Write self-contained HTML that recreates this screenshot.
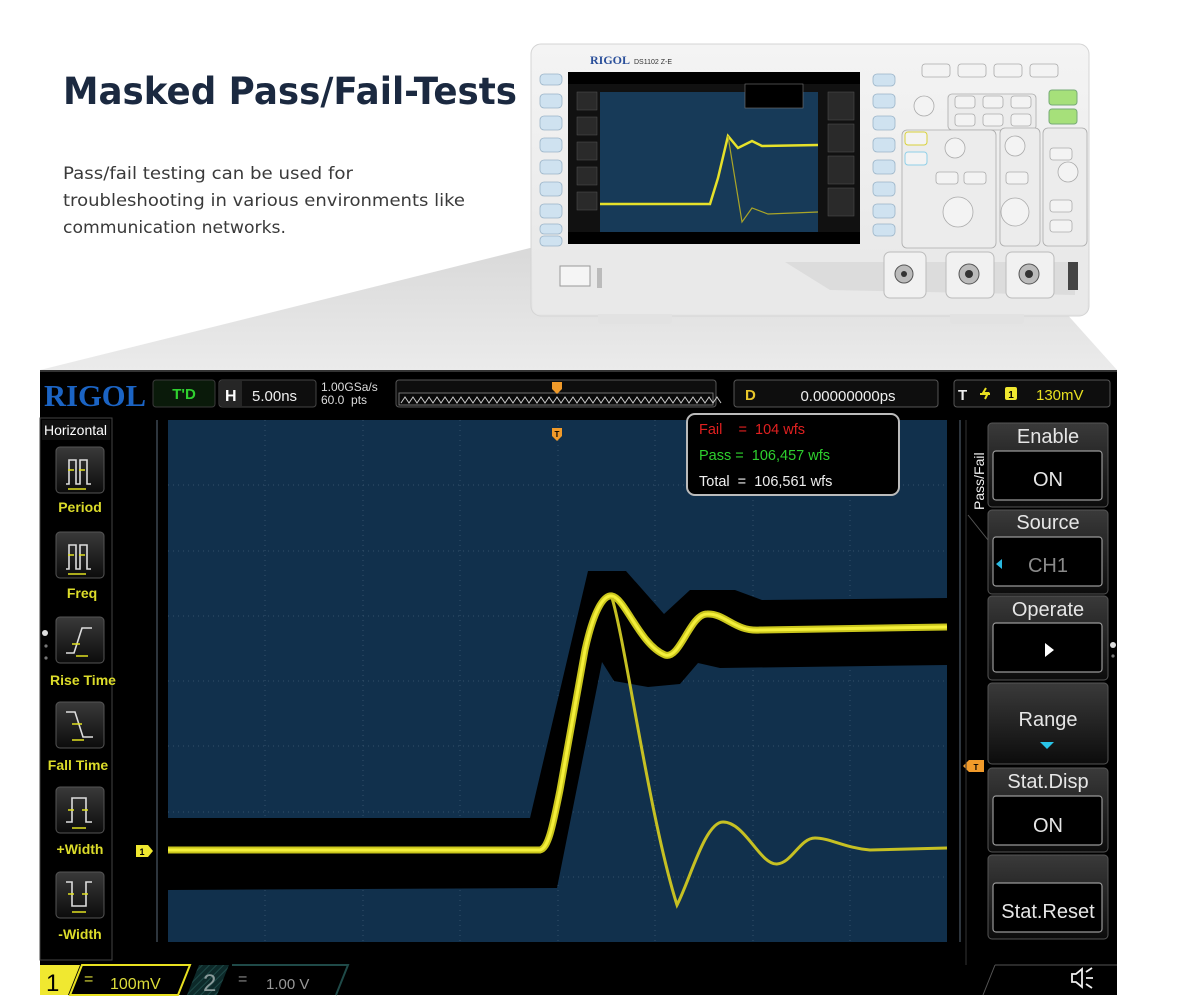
<!DOCTYPE html>
<html><head><meta charset="utf-8"><style>
html,body{margin:0;padding:0;background:#fff;}
svg{display:block}
svg text{font-family:"Liberation Sans",Arial,sans-serif;white-space:pre}
svg text.dv{font-family:"DejaVu Sans",sans-serif}
svg text.sf{font-family:"Liberation Serif",serif}
</style></head><body>
<svg width="1200" height="1000" viewBox="0 0 1200 1000" xmlns="http://www.w3.org/2000/svg" xml:space="preserve">
<defs>
<linearGradient id="gr" x1="0" y1="0" x2="0" y2="1"><stop offset="0" stop-color="#d9d9d9"/><stop offset="1" stop-color="#ebebeb"/></linearGradient>
<linearGradient id="btn" x1="0" y1="0" x2="0" y2="1"><stop offset="0" stop-color="#3a3a3a"/><stop offset="1" stop-color="#0c0c0c"/></linearGradient>
<linearGradient id="dev" x1="0" y1="0" x2="0" y2="1"><stop offset="0" stop-color="#f4f4f4"/><stop offset="1" stop-color="#e6e6e6"/></linearGradient>
<pattern id="hatch" width="5" height="5" patternUnits="userSpaceOnUse" patternTransform="rotate(45)"><rect width="5" height="5" fill="#0d2a2a"/><line x1="0" y1="0" x2="0" y2="5" stroke="#1f4a48" stroke-width="2"/></pattern>
</defs>
<rect width="1200" height="1000" fill="#fff"/>
<text class="dv" x="63" y="104" font-size="37" font-weight="bold" fill="#1b2940" textLength="454" lengthAdjust="spacingAndGlyphs">Masked Pass/Fail-Tests</text>
<g font-size="16.5" fill="#3a3a3a">
<text class="dv" x="63" y="179" textLength="290" lengthAdjust="spacingAndGlyphs">Pass/fail testing can be used for</text>
<text class="dv" x="63" y="206" textLength="402" lengthAdjust="spacingAndGlyphs">troubleshooting in various environments like</text>
<text class="dv" x="63" y="233" textLength="223" lengthAdjust="spacingAndGlyphs">communication networks.</text>
</g>
<polygon points="530,248 1065,312 1117,370 40,370" fill="url(#gr)"/>
<g>
<rect x="531" y="44" width="558" height="272" rx="10" fill="url(#dev)" stroke="#d4d4d4"/>
<rect x="598" y="306" width="74" height="18" rx="3" fill="#e2e2e2"/>
<rect x="950" y="306" width="74" height="18" rx="3" fill="#e2e2e2"/>
<rect x="533" y="250" width="554" height="64" rx="6" fill="#e9e9e9"/>
<rect x="560" y="266" width="30" height="20" fill="#f5f5f5" stroke="#999"/>
<rect x="597" y="268" width="5" height="20" fill="#bbb"/>
<polygon points="785,262 830,290 1075,295 1075,262" fill="#dcdcdc"/>
<text class="sf" x="590" y="64" font-size="12" font-weight="bold" fill="#2a4f9a">RIGOL</text>
<text x="634" y="64" font-size="7" fill="#333">DS1102 Z-E</text>
<rect x="568" y="72" width="292" height="172" fill="#111"/>
<rect x="600" y="92" width="218" height="140" fill="#173a58"/>
<rect x="568" y="72" width="292" height="12" fill="#000"/>
<rect x="568" y="232" width="292" height="12" fill="#000"/>
<rect x="745" y="84" width="58" height="24" fill="#000" stroke="#777" stroke-width="0.6"/>
<g fill="#2a2a2a" stroke="#555" stroke-width="0.5">
<rect x="577" y="92" width="20" height="18"/><rect x="577" y="117" width="20" height="18"/><rect x="577" y="142" width="20" height="18"/><rect x="577" y="167" width="20" height="18"/><rect x="577" y="192" width="20" height="18"/>
<rect x="828" y="92" width="26" height="28"/><rect x="828" y="124" width="26" height="28"/><rect x="828" y="156" width="26" height="28"/><rect x="828" y="188" width="26" height="28"/>
</g>
<polyline points="600,204 710,204 718,178 728,136 738,148 752,141 762,146 818,145" fill="none" stroke="#e6e12a" stroke-width="2.5"/>
<polyline points="728,136 742,222 752,208 768,214 818,212" fill="none" stroke="#aaa528" stroke-width="1.2"/>
<g fill="#cfe2f0" stroke="#9bb4c8" stroke-width="0.8">
<rect x="540" y="74" width="22" height="11" rx="4"/>
<rect x="540" y="94" width="22" height="14" rx="4"/><rect x="540" y="116" width="22" height="14" rx="4"/><rect x="540" y="138" width="22" height="14" rx="4"/><rect x="540" y="160" width="22" height="14" rx="4"/><rect x="540" y="182" width="22" height="14" rx="4"/><rect x="540" y="204" width="22" height="14" rx="4"/>
<rect x="540" y="224" width="22" height="10" rx="4"/><rect x="540" y="236" width="22" height="10" rx="4"/>
<rect x="873" y="74" width="22" height="12" rx="4"/><rect x="873" y="94" width="22" height="14" rx="4"/><rect x="873" y="116" width="22" height="14" rx="4"/><rect x="873" y="138" width="22" height="14" rx="4"/><rect x="873" y="160" width="22" height="14" rx="4"/><rect x="873" y="182" width="22" height="14" rx="4"/><rect x="873" y="204" width="22" height="14" rx="4"/><rect x="873" y="224" width="22" height="12" rx="4"/>
</g>
<g fill="#f3f3f3" stroke="#aaa" stroke-width="0.8">
<rect x="922" y="64" width="28" height="13" rx="3"/><rect x="958" y="64" width="28" height="13" rx="3"/><rect x="994" y="64" width="28" height="13" rx="3"/><rect x="1030" y="64" width="28" height="13" rx="3"/>
<rect x="948" y="94" width="88" height="36" rx="4" fill="#ececec"/>
<rect x="955" y="96" width="20" height="12" rx="3"/><rect x="983" y="96" width="20" height="12" rx="3"/><rect x="1011" y="96" width="20" height="12" rx="3"/>
<rect x="955" y="114" width="20" height="12" rx="3"/><rect x="983" y="114" width="20" height="12" rx="3"/><rect x="1011" y="114" width="20" height="12" rx="3"/>
<rect x="902" y="130" width="94" height="118" rx="5" fill="#ececec"/>
<rect x="1000" y="128" width="40" height="118" rx="5" fill="#ececec"/>
<rect x="1043" y="128" width="44" height="118" rx="5" fill="#ececec"/>
<rect x="936" y="172" width="22" height="12" rx="3"/><rect x="964" y="172" width="22" height="12" rx="3"/><rect x="1006" y="172" width="22" height="12" rx="3"/>
<rect x="1050" y="148" width="22" height="12" rx="3"/><rect x="1050" y="200" width="22" height="12" rx="3"/><rect x="1050" y="220" width="22" height="12" rx="3"/>
<circle cx="924" cy="106" r="10"/><circle cx="955" cy="148" r="10"/><circle cx="1015" cy="146" r="10"/><circle cx="958" cy="212" r="15"/><circle cx="1015" cy="212" r="14"/><circle cx="1068" cy="172" r="10"/>
</g>
<rect x="905" y="132" width="22" height="13" rx="3" fill="#f3f3f3" stroke="#d9d13a"/>
<rect x="905" y="152" width="22" height="13" rx="3" fill="#f3f3f3" stroke="#8fcfe8"/>
<rect x="1049" y="90" width="28" height="15" rx="3" fill="#a6e07a" stroke="#7a7"/>
<rect x="1049" y="109" width="28" height="15" rx="3" fill="#a6e07a" stroke="#7a7"/>
<g fill="#f1f1f1" stroke="#bbb"><rect x="884" y="252" width="42" height="46" rx="6"/><rect x="946" y="252" width="48" height="46" rx="6"/><rect x="1006" y="252" width="48" height="46" rx="6"/></g>
<g fill="#bbb" stroke="#555"><circle cx="904" cy="274" r="9"/><circle cx="969" cy="274" r="10"/><circle cx="1029" cy="274" r="10"/></g>
<g fill="#333"><circle cx="904" cy="274" r="3"/><circle cx="969" cy="274" r="4"/><circle cx="1029" cy="274" r="4"/></g>
<rect x="1068" y="262" width="10" height="28" fill="#444"/>
</g>
<rect x="40" y="370" width="1077" height="625" fill="#000"/>
<rect x="40" y="370" width="1077" height="2" fill="#333"/>
<text class="sf" x="44" y="406" font-size="31" font-weight="bold" fill="#1b64c4" textLength="102" lengthAdjust="spacingAndGlyphs">RIGOL</text>
<rect x="153" y="380" width="62" height="27" rx="3" fill="#0a1a0a" stroke="#3a3a3a"/>
<text x="184" y="399" font-size="15" font-weight="bold" fill="#2fd12f" text-anchor="middle">T'D</text>
<rect x="219" y="380" width="97" height="27" rx="3" fill="#0e0e0e" stroke="#444"/>
<rect x="220" y="381" width="22" height="25" fill="#262626"/>
<text x="225" y="401" font-size="16" font-weight="bold" fill="#fff">H</text>
<text x="252" y="401" font-size="15" fill="#eee">5.00ns</text>
<text x="321" y="391" font-size="12" fill="#ddd">1.00GSa/s</text>
<text x="321" y="404" font-size="12" fill="#ddd">60.0  pts</text>
<rect x="396" y="380" width="320" height="27" rx="3" fill="#0e0e0e" stroke="#555"/>
<rect x="399" y="393" width="314" height="12" fill="#0a0a0a" stroke="#888" stroke-width="0.8"/>
<path d="M401,403 l4,-6 l4,6 l4,-6 l4,6 l4,-6 l4,6 l4,-6 l4,6 l4,-6 l4,6 l4,-6 l4,6 l4,-6 l4,6 l4,-6 l4,6 l4,-6 l4,6 l4,-6 l4,6 l4,-6 l4,6 l4,-6 l4,6 l4,-6 l4,6 l4,-6 l4,6 l4,-6 l4,6 l4,-6 l4,6 l4,-6 l4,6 l4,-6 l4,6 l4,-6 l4,6 l4,-6 l4,6 l4,-6 l4,6 l4,-6 l4,6 l4,-6 l4,6 l4,-6 l4,6 l4,-6 l4,6 l4,-6 l4,6 l4,-6 l4,6 l4,-6 l4,6 l4,-6 l4,6 l4,-6 l4,6 l4,-6 l4,6 l4,-6 l4,6 l4,-6 l4,6 l4,-6 l4,6 l4,-6 l4,6 l4,-6 l4,6 l4,-6 l4,6 l4,-6 l4,6 l4,-6 l4,6 l4,-6 l4,6" fill="none" stroke="#ccc" stroke-width="1"/>
<path d="M552,382 h10 v7 l-5,5 l-5,-5z" fill="#f09a2a"/>
<rect x="734" y="380" width="204" height="27" rx="3" fill="#0e0e0e" stroke="#555"/>
<text x="745" y="400" font-size="15" font-weight="bold" fill="#e8c62a">D</text>
<text x="848" y="401" font-size="15" fill="#eee" text-anchor="middle">0.00000000ps</text>
<rect x="954" y="380" width="156" height="27" rx="3" fill="#0e0e0e" stroke="#555"/>
<text x="958" y="400" font-size="15" font-weight="bold" fill="#eee">T</text>
<path d="M986,388 l-3,5 h5 l-3,6 M980,394 h10" stroke="#e8e020" stroke-width="2" fill="none"/>
<rect x="1005" y="387" width="12" height="13" rx="2" fill="#f0e830"/>
<text x="1011" y="398" font-size="10" font-weight="bold" fill="#000" text-anchor="middle">1</text>
<text x="1036" y="400" font-size="15" fill="#e8e020">130mV</text>
<rect x="40" y="418" width="72" height="542" fill="#000" stroke="#444"/>
<rect x="42" y="420" width="68" height="20" fill="#111"/>
<text x="44" y="435" font-size="14" fill="#fff">Horizontal</text>
<g fill="url(#btn)" stroke="#555" stroke-width="1">
<rect x="56" y="447" width="48" height="46" rx="4"/>
<rect x="56" y="532" width="48" height="46" rx="4"/>
<rect x="56" y="617" width="48" height="46" rx="4"/>
<rect x="56" y="702" width="48" height="46" rx="4"/>
<rect x="56" y="787" width="48" height="46" rx="4"/>
<rect x="56" y="872" width="48" height="46" rx="4"/>
</g>
<g fill="none" stroke="#ddd" stroke-width="1.6">
<path d="M66,484 h3 v-24 h7 v24 h4 v-24 h7 v24 h4"/>
<path d="M66,569 h3 v-24 h7 v24 h4 v-24 h7 v24 h4"/>
<path d="M66,653 h8 l8,-25 h10"/>
<path d="M66,712 h9 l8,25 h10"/>
<path d="M66,822 h6 v-24 h14 v24 h6"/>
<path d="M66,882 h6 v24 h14 v-24 h6"/>
</g>
<g stroke="#e0e020" stroke-width="1.6" fill="none">
<path d="M68,470 h6 M79,470 h6 M68,489 h18"/>
<path d="M68,555 h6 M79,555 h6 M68,574 h18"/>
<path d="M72,644 h8 M76,656 h12"/>
<path d="M72,724 h10 M72,740 h12"/>
<path d="M68,810 h6 M82,810 h6 M72,828 h14"/>
<path d="M68,894 h6 M82,894 h6 M72,912 h14"/>
</g>
<g font-size="14" font-weight="bold" fill="#dcdc2a" text-anchor="middle">
<text x="80" y="512">Period</text>
<text x="82" y="598">Freq</text>
<text x="83" y="685">Rise Time</text>
<text x="78" y="770">Fall Time</text>
<text x="80" y="854">+Width</text>
<text x="80" y="939">-Width</text>
</g>
<g fill="#ddd"><circle cx="45" cy="633" r="3"/><circle cx="46" cy="646" r="1.6" fill="#777"/><circle cx="46" cy="658" r="1.6" fill="#777"/><circle cx="1113" cy="645" r="3"/><circle cx="1113" cy="656" r="1.6" fill="#777"/></g>
<rect x="168" y="420" width="779" height="522" fill="#11304c"/>
<g stroke="#5a6a7a" stroke-width="1">
<line x1="157" y1="420" x2="157" y2="942"/>
<line x1="960" y1="420" x2="960" y2="942"/>
</g>
<g stroke="#32506a" stroke-width="1" stroke-dasharray="1,4">
<line x1="265" y1="420" x2="265" y2="942"/><line x1="363" y1="420" x2="363" y2="942"/><line x1="460" y1="420" x2="460" y2="942"/><line x1="558" y1="420" x2="558" y2="942"/><line x1="655" y1="420" x2="655" y2="942"/><line x1="753" y1="420" x2="753" y2="942"/><line x1="850" y1="420" x2="850" y2="942"/>
<line x1="168" y1="485" x2="947" y2="485"/><line x1="168" y1="551" x2="947" y2="551"/><line x1="168" y1="616" x2="947" y2="616"/><line x1="168" y1="681" x2="947" y2="681"/><line x1="168" y1="746" x2="947" y2="746"/><line x1="168" y1="812" x2="947" y2="812"/><line x1="168" y1="877" x2="947" y2="877"/>
</g>
<polygon points="168,818 530,818 588,571 626,571 664,614 690,590 735,590 762,600 947,598 947,665 720,668 698,663 680,684 648,687 614,681 602,662 557,888 168,890" fill="#000"/>
<path d="M168,850 L540,850 C548,848 552,830 560,790 L585,650 C595,605 605,595 612,596 C625,598 640,645 665,655 C680,660 690,614 707,614 C725,613 735,632 760,630 L947,627" fill="none" stroke="#c9c51c" stroke-width="7" stroke-linejoin="round"/>
<path d="M168,850 L540,850 C548,848 552,830 560,790 L585,650 C595,605 605,595 612,596 C625,598 640,645 665,655 C680,660 690,614 707,614 C725,613 735,632 760,630 L947,627" fill="none" stroke="#f4ef3a" stroke-width="3" stroke-linejoin="round"/>
<path d="M612,598 C625,640 650,820 677,905 C690,880 705,822 723,822 C745,822 760,865 777,864 C792,863 800,838 815,838 C830,838 845,848 870,850 L947,848" fill="none" stroke="#c6c023" stroke-width="3"/>
<path d="M552,428 h10 v8 l-5,5 l-5,-5z" fill="#f09a2a"/>
<text x="557" y="437" font-size="8" font-weight="bold" fill="#000" text-anchor="middle">T</text>
<path d="M963,766 l6,-6 h15 v12 h-15z" fill="#f09a2a"/>
<text x="976" y="770" font-size="8" font-weight="bold" fill="#000" text-anchor="middle">T</text>
<path d="M136,845 h12 l5,6 l-5,6 h-12z" fill="#f0e830"/>
<text x="142" y="855" font-size="9" font-weight="bold" fill="#000" text-anchor="middle">1</text>
<rect x="687" y="414" width="212" height="81" rx="8" fill="#000" stroke="#bbb" stroke-width="2"/>
<text x="699" y="434" font-size="14.5" fill="#e02020">Fail    =  104 wfs</text>
<text x="699" y="460" font-size="14.5" fill="#2ed02e">Pass =  106,457 wfs</text>
<text x="699" y="486" font-size="14.5" fill="#eee">Total  =  106,561 wfs</text>
<path d="M966,420 v545" stroke="#333"/>
<text transform="translate(984,510) rotate(-90)" font-size="14" fill="#eee">Pass/Fail</text>
<path d="M968,515 l20,25" stroke="#555" fill="none"/>
<g fill="url(#btn)" stroke="#555">
<rect x="988" y="423" width="120" height="84" rx="4"/>
<rect x="988" y="510" width="120" height="84" rx="4"/>
<rect x="988" y="596" width="120" height="84" rx="4"/>
<rect x="988" y="683" width="120" height="81" rx="4"/>
<rect x="988" y="768" width="120" height="84" rx="4"/>
<rect x="988" y="855" width="120" height="84" rx="4"/>
</g>
<g fill="#000" stroke="#999" stroke-width="1.2">
<rect x="993" y="451" width="109" height="49" rx="3"/>
<rect x="993" y="537" width="109" height="49" rx="3"/>
<rect x="993" y="623" width="109" height="49" rx="3"/>
<rect x="993" y="796" width="109" height="49" rx="3"/>
<rect x="993" y="883" width="109" height="49" rx="3"/>
</g>
<g font-size="20" fill="#e6e6e6" text-anchor="middle">
<text x="1048" y="443">Enable</text>
<text x="1048" y="486">ON</text>
<text x="1048" y="529">Source</text>
<text x="1048" y="572" fill="#8a8a8a">CH1</text>
<text x="1048" y="616">Operate</text>
<text x="1048" y="726">Range</text>
<text x="1048" y="788">Stat.Disp</text>
<text x="1048" y="832">ON</text>
<text x="1048" y="918">Stat.Reset</text>
</g>
<path d="M1002,559 l-6,5 l6,5z" fill="#29b8e0"/>
<path d="M1045,643 l9,7 l-9,7z" fill="#fff"/>
<path d="M1040,742 h14 l-7,7z" fill="#29c4e8"/>
<path d="M40,965 h40 l-12,30 h-28z" fill="#f0e830"/>
<text x="46" y="991" font-size="24" fill="#000">1</text>
<path d="M82,965 h108 l-12,30 h-108z" fill="none" stroke="#e8e020" stroke-width="2"/>
<text x="84" y="984" font-size="16" fill="#dcdc3a">=</text>
<text x="110" y="989" font-size="16" fill="#dcdc3a">100mV</text>
<path d="M199,965 h30 l-12,30 h-30z" fill="url(#hatch)"/>
<text x="203" y="991" font-size="24" fill="#8a9a9a">2</text>
<path d="M232,965 h116 l-12,30" fill="none" stroke="#1f4a48" stroke-width="2"/>
<text x="238" y="984" font-size="16" fill="#888">=</text>
<text x="266" y="989" font-size="15" fill="#999">1.00 V</text>
<path d="M995,965 h122 M995,965 l-12,30" stroke="#555" fill="none"/>
<path d="M1072,974 h4 l6,-5 v18 l-6,-5 h-4z M1086,972 l6,-4 M1086,978 h7 M1086,984 l6,4" fill="none" stroke="#eee" stroke-width="1.8"/>
</svg>
</body></html>
